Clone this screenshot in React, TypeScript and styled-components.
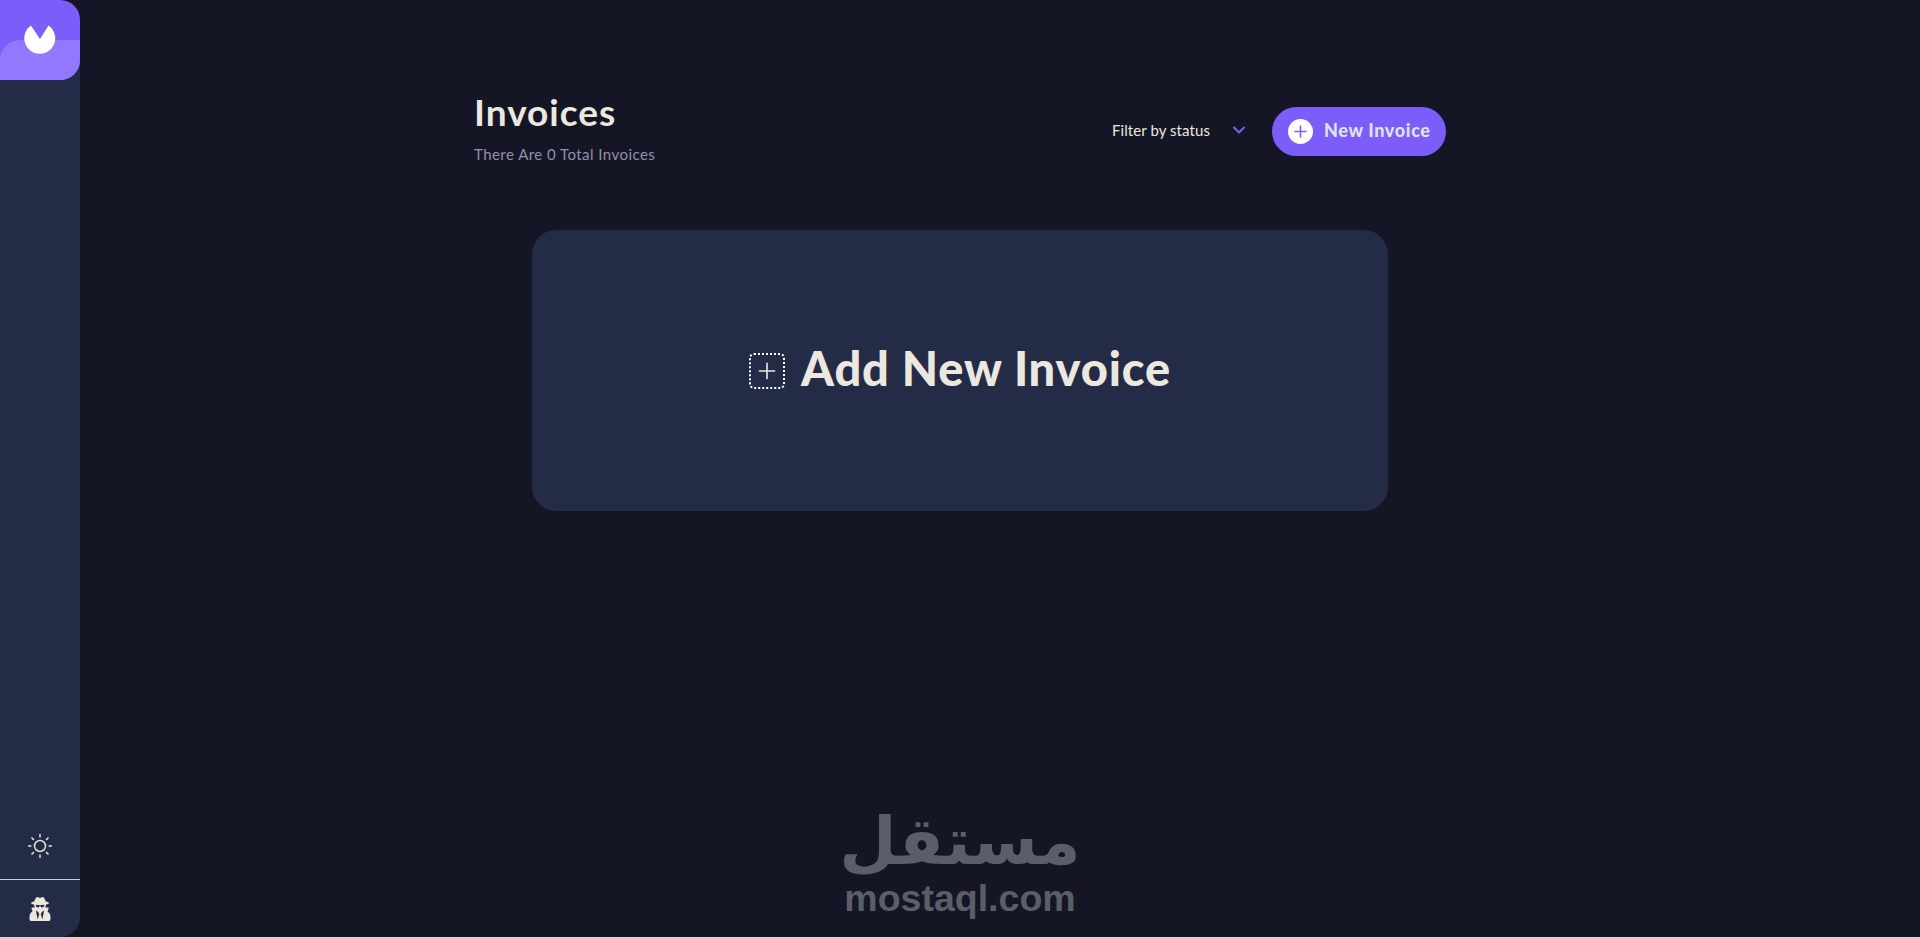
import React from 'react';
import styled, { createGlobalStyle } from 'styled-components';
import { Plus, ChevronDown } from 'lucide-react';
import { FaUserSecret } from 'react-icons/fa';

const GlobalStyle = createGlobalStyle`
	html, body {
		margin: 0;
		padding: 0;
		height: 100%;
		background: #141625;
		font-family: 'Lato', 'Liberation Sans', sans-serif;
	}
	* {
		box-sizing: border-box;
	}
`;

const Page = styled.div`
	position: relative;
	display: flex;
	height: 937px;
	overflow: hidden;
	background: #141625;
`;

const Sidebar = styled.aside`
	width: 80px;
	height: 100%;
	flex-shrink: 0;
	display: flex;
	flex-direction: column;
	background: #232b46;
	border-radius: 0 20px 20px 0;
`;

const LogoBox = styled.div`
	position: relative;
	width: 80px;
	height: 80px;
	display: flex;
	align-items: center;
	justify-content: center;
	overflow: hidden;
	background: #7c5dfa;
	border-radius: 0 20px 20px 0;

	&::after {
		content: '';
		position: absolute;
		left: 0;
		right: 0;
		bottom: 0;
		height: 40px;
		background: #9277ff;
		border-radius: 20px 0 0 0;
	}
`;

const LogoMark = styled.svg`
	position: relative;
	z-index: 1;
	width: 32px;
	height: 32px;
`;

const Spacer = styled.div`
	flex: 1;
`;

const ThemeButton = styled.div`
	height: 78px;
	display: flex;
	align-items: flex-start;
	justify-content: center;
	padding-top: 32px;
	color: #e8e4dc;
	border-bottom: 1px solid #c9cde0;
`;

const Avatar = styled.div`
	height: 57px;
	display: flex;
	align-items: flex-start;
	justify-content: center;
	padding-top: 17px;
	color: #ece7df;
`;

const Main = styled.main`
	flex: 1;
	display: flex;
	flex-direction: column;
	align-items: center;
	padding: 91px 80px 0 0;
`;

const Header = styled.header`
	width: 972px;
	height: 139px;
	display: flex;
	justify-content: space-between;
	align-items: flex-start;
`;

const TitleBlock = styled.div`
	display: flex;
	flex-direction: column;
`;

const Title = styled.h1`
	margin: 0;
	font-size: 37px;
	line-height: 42px;
	font-weight: 700;
	letter-spacing: 1px;
	color: #ece7df;
`;

const Subtitle = styled.p`
	margin: 12px 0 0;
	font-size: 15px;
	line-height: 18px;
	letter-spacing: 0.45px;
	color: #958fab;
`;

const Actions = styled.div`
	display: flex;
	align-items: center;
	margin-top: 16px;
`;

const Filter = styled.div`
	display: flex;
	align-items: center;
	gap: 19px;
	margin-right: 23px;
	padding-bottom: 3px;
	font-size: 15px;
	letter-spacing: 0.08px;
	color: #ece7df;
`;

const NewButton = styled.button`
	width: 174px;
	height: 49px;
	display: flex;
	align-items: center;
	gap: 11px;
	padding: 0 0 0 16px;
	border: none;
	border-radius: 25px;
	background: #7c5dfa;
	color: #dfe3ea;
	font-family: inherit;
	font-size: 18px;
	font-weight: 900;
	letter-spacing: 0.65px;
`;

const ButtonLabel = styled.span`
	margin-bottom: 3px;
`;

const PlusCircle = styled.span`
	width: 25px;
	height: 25px;
	display: flex;
	align-items: center;
	justify-content: center;
	border-radius: 50%;
	background: #fff;
	color: #7c5dfa;
`;

const AddCard = styled.div`
	width: 856px;
	height: 281px;
	display: flex;
	align-items: center;
	justify-content: center;
	gap: 16px;
	background: #232b46;
	border-radius: 24px;
`;

const DottedBox = styled.span`
	width: 36px;
	height: 36px;
	display: flex;
	align-items: center;
	justify-content: center;
	border: 2px dotted #fff;
	border-radius: 5px;
	color: #ece7df;
`;

const AddText = styled.span`
	margin-top: -6px;
	font-size: 47px;
	font-weight: 900;
	letter-spacing: 0.85px;
	color: #ece7df;
`;

const Watermark = styled.div`
	position: absolute;
	left: 845px;
	top: 798px;
	width: 230px;
	display: flex;
	flex-direction: column;
	align-items: center;
	color: #5b5e68;
	pointer-events: none;
`;

const WatermarkArabic = styled.span`
	height: 80px;
	font-family: 'DejaVu Sans', sans-serif;
	font-size: 66px;
	line-height: 88px;
	font-weight: 700;
`;

const WatermarkLatin = styled.span`
	font-family: 'Liberation Sans', sans-serif;
	font-size: 37.5px;
	line-height: 40px;
	font-weight: 700;
`;

function SunIcon(): JSX.Element {
	return (
		<svg width="24" height="24" viewBox="0 0 24 24" fill="none" stroke="currentColor" strokeWidth="1.5">
			<circle cx="12" cy="12" r="5.5" />
			<path d="M12 0v3.5M12 20.5V24M0 12h3.5M20.5 12H24M3.5 3.5l2.5 2.5M18 18l2.5 2.5M3.5 20.5L6 18M18 6l2.5-2.5" />
		</svg>
	);
}

export default function App(): JSX.Element {
	return (
		<Page>
			<GlobalStyle />
			<Sidebar>
				<LogoBox>
					<LogoMark viewBox="0 0 32 32">
						<path
							d="M7 1.5 L16 15 L24.5 1.5 A15.5 15.5 0 1 1 7 1.5 Z"
							fill="#fff"
						/>
					</LogoMark>
				</LogoBox>
				<Spacer />
				<ThemeButton>
					<SunIcon />
				</ThemeButton>
				<Avatar>
					<FaUserSecret size={24} />
				</Avatar>
			</Sidebar>
			<Main>
				<Header>
					<TitleBlock>
						<Title>Invoices</Title>
						<Subtitle>There Are 0 Total Invoices</Subtitle>
					</TitleBlock>
					<Actions>
						<Filter>
							Filter by status
							<ChevronDown size={20} strokeWidth={2.4} color="#7c5dfa" />
						</Filter>
						<NewButton>
							<PlusCircle>
								<Plus size={19} strokeWidth={2} />
							</PlusCircle>
							<ButtonLabel>New Invoice</ButtonLabel>
						</NewButton>
					</Actions>
				</Header>
				<AddCard>
					<DottedBox>
						<Plus size={26} strokeWidth={1.5} />
					</DottedBox>
					<AddText>Add New Invoice</AddText>
				</AddCard>
			</Main>
			<Watermark>
				<WatermarkArabic>مستقل</WatermarkArabic>
				<WatermarkLatin>mostaql.com</WatermarkLatin>
			</Watermark>
		</Page>
	);
}
